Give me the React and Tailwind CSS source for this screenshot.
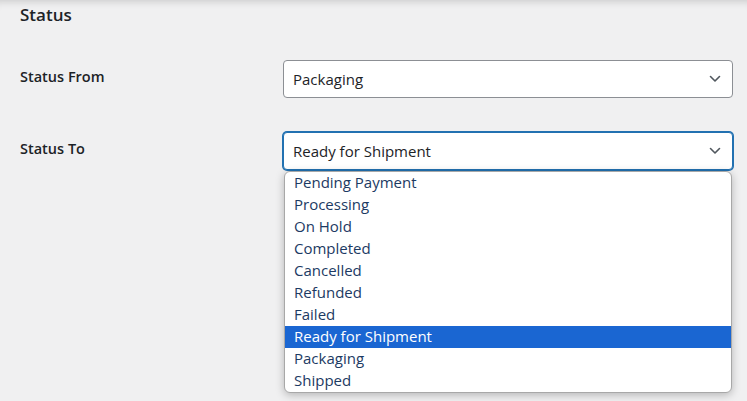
import React from 'react';

const options = [
  'Pending Payment',
  'Processing',
  'On Hold',
  'Completed',
  'Cancelled',
  'Refunded',
  'Failed',
  'Ready for Shipment',
  'Packaging',
  'Shipped',
];

const Chevron = () => (
  <svg width="12" height="8" viewBox="0 0 12 8" fill="none" className="text-[#50575e]">
    <path d="M1.5 1.5 6 6l4.5-4.5" stroke="currentColor" strokeWidth="1.6" strokeLinecap="round" strokeLinejoin="round" />
  </svg>
);

const App = () => {
  const selected = 'Ready for Shipment';

  return (
    <div
      className="w-[747px] h-[401px] overflow-hidden bg-[#f0f0f1] px-5 text-[#1d2327] shadow-[inset_0_9px_8px_-8px_rgba(0,0,0,0.18)]"
      style={{ fontFamily: '"Open Sans", "Noto Sans", sans-serif' }}
    >
      <h2 className="pt-[4px] text-[17px] leading-[22px] font-semibold">Status</h2>

      <div className="mt-[34px] grid grid-cols-[263px_1fr] items-start">
        <div className="pt-[7px] text-[14.5px] leading-[20px] font-semibold">Status From</div>
        <div className="w-[450px]">
          <div className="flex h-[38px] items-center justify-between rounded-[4px] border border-[#8c8f94] bg-white pl-[9px] pr-[11px] text-[15px]">
            <span>Packaging</span>
            <Chevron />
          </div>
        </div>
      </div>

      <div className="mt-[34px] grid grid-cols-[263px_1fr] items-start">
        <div className="pt-[7px] text-[14.5px] leading-[20px] font-semibold">Status To</div>
        <div className="relative w-[450px]">
          <div className="flex h-[38px] items-center justify-between rounded-[4px] border border-[#2271b1] bg-white pl-[9px] pr-[11px] text-[15px] shadow-[0_0_0_1px_#2271b1]">
            <span>{selected}</span>
            <Chevron />
          </div>
          <ul className="absolute left-[1px] top-[39px] w-[448px] overflow-hidden rounded-[6px] border border-[#a8a8a8] bg-white shadow-[0_2px_8px_rgba(0,0,0,0.25)]">
            {options.map((o) => (
              <li
                key={o}
                className={
                  o === selected
                    ? 'h-[22px] pb-[2px] pl-[9px] text-[15px] leading-[20px] bg-[#1a66d2] text-white'
                    : 'h-[22px] pb-[2px] pl-[9px] text-[15px] leading-[20px] text-[#1c3a63]'
                }
              >
                {o}
              </li>
            ))}
          </ul>
        </div>
      </div>
    </div>
  );
};

export default App;
